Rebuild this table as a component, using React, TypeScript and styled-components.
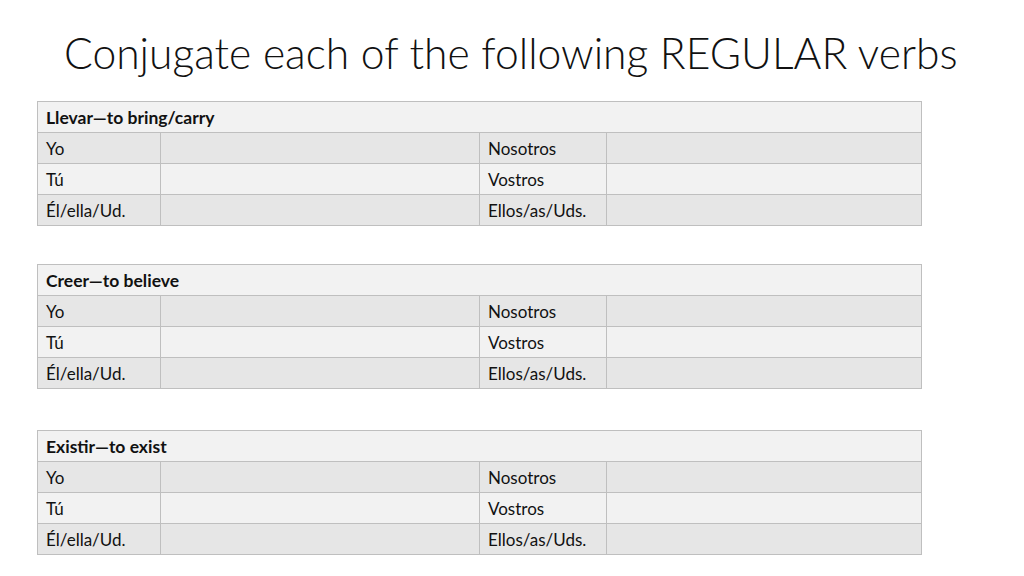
import React from "react";
import styled, { createGlobalStyle } from "styled-components";

const Global = createGlobalStyle`
  html, body { margin: 0; padding: 0; background: #ffffff; }
  body { width: 1024px; height: 576px; overflow: hidden; }
`;

const Slide = styled.div`
  width: 1024px;
  height: 576px;
  box-sizing: border-box;
  display: flex;
  flex-direction: column;
  padding: 20px 0 0 37px;
  background: #ffffff;
  font-family: Lato, "Open Sans", sans-serif;
`;

const Title = styled.h1`
  margin: 0 0 15px 27px;
  font-family: Lato, sans-serif;
  font-weight: 300;
  font-size: 42.6px;
  line-height: 66px;
  color: #111111;
  white-space: nowrap;
`;

const Tables = styled.div`
  display: flex;
  flex-direction: column;
`;

const Table = styled.table<{ $space: number }>`
  width: 884px;
  margin-top: ${(p) => p.$space}px;
  border-collapse: collapse;
  table-layout: fixed;
  font-family: Lato, sans-serif;
  font-size: 17px;
  color: #111111;
`;

const Row = styled.tr<{ $shade: "light" | "dark" }>`
  height: 31px;
  background: ${(p) => (p.$shade === "dark" ? "#e6e6e6" : "#f2f2f2")};
`;

const HeadCell = styled.td`
  border: 1px solid #bfbfbf;
  padding: 0 8px;
  font-weight: 700;
  font-size: 17.5px;
  vertical-align: middle;
`;

const Cell = styled.td`
  border: 1px solid #bfbfbf;
  padding: 0 8px;
  vertical-align: middle;
  white-space: nowrap;
`;

const verbs: [string, number][] = [
  ["Llevar—to bring/carry", 0],
  ["Creer—to believe", 38],
  ["Existir—to exist", 41],
];
const rows: [string, string][] = [
  ["Yo", "Nosotros"],
  ["Tú", "Vostros"],
  ["Él/ella/Ud.", "Ellos/as/Uds."],
];

export default function App() {
  return (
    <>
      <Global />
      <Slide>
        <Title>Conjugate each of the following REGULAR verbs</Title>
        <Tables>
          {verbs.map(([v, space]) => (
            <Table key={v} $space={space}>
              <colgroup>
                <col style={{ width: 123 }} />
                <col style={{ width: 319 }} />
                <col style={{ width: 127 }} />
                <col style={{ width: 315 }} />
              </colgroup>
              <tbody>
                <Row $shade="light">
                  <HeadCell colSpan={4}>{v}</HeadCell>
                </Row>
                {rows.map(([a, b], i) => (
                  <Row key={a} $shade={i % 2 === 0 ? "dark" : "light"}>
                    <Cell>{a}</Cell>
                    <Cell />
                    <Cell>{b}</Cell>
                    <Cell />
                  </Row>
                ))}
              </tbody>
            </Table>
          ))}
        </Tables>
      </Slide>
    </>
  );
}
